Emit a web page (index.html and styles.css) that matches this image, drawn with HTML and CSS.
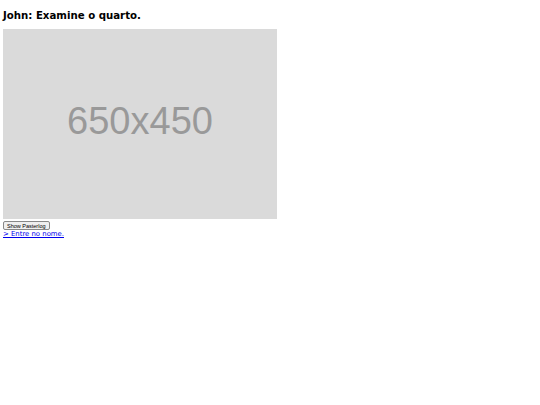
FILE: index.html
```html
<!DOCTYPE html>
<html>
<head>
<meta charset="utf-8">
<link rel="stylesheet" href="styles.css">
</head>
<body>
<h2 class="title">John: Examine o quarto.</h2>
<div class="placeholder"><span class="ph-text">650x450</span></div>
<div class="controls">
<button class="btn">Show Pasterlog</button>
<a class="choice" href="#">&gt; Entre no nome.</a>
</div>
</body>
</html>
```
FILE: styles.css
```css
html, body {
  margin: 0;
  padding: 0;
  background: #fff;
}
body {
  padding: 3px;
  font-family: "DejaVu Sans", sans-serif;
}
.title {
  margin: 6px 0 0 0;
  font-size: 10.2px;
  line-height: 13px;
  font-weight: bold;
  color: #000;
}
.placeholder {
  margin-top: 7px;
  width: 274px;
  height: 190px;
  background: #dadada;
  display: flex;
  align-items: center;
  justify-content: center;
}
.ph-text {
  font-family: "Liberation Sans", Arial, sans-serif;
  font-size: 38px;
  color: #999;
  position: relative;
  top: -3px;
}
.controls {
  display: flex;
  flex-direction: column;
  align-items: flex-start;
  margin-top: 2px;
}
.btn {
  font-family: "Liberation Sans", Arial, sans-serif;
  font-size: 5.5px;
  padding: 1px 3px;
  height: 9px;
  line-height: 6px;
  border: 1px solid #888;
  border-radius: 2px;
  background: #efefef;
  color: #000;
}
.choice {
  font-size: 6.9px;
  line-height: 8px;
  color: #0000ee;
  text-decoration: underline;
}
```
